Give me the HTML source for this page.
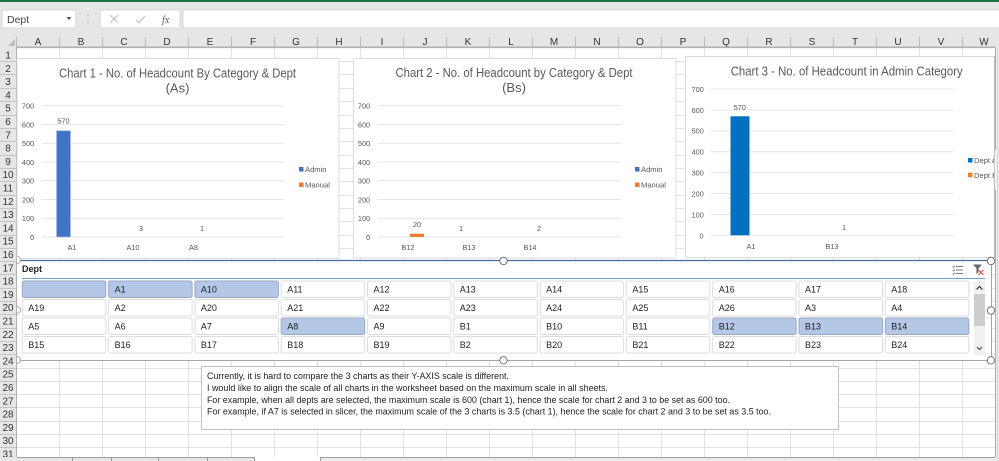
<!DOCTYPE html>
<html><head><meta charset="utf-8"><title>Excel charts</title>
<style>
html,body{margin:0;padding:0;background:#fff;width:999px;height:461px;overflow:hidden}
svg{display:block;font-family:"Liberation Sans",sans-serif;filter:blur(.3px)}
.h{font-size:10px;fill:#333;text-anchor:middle}
.a{font-size:7.3px;fill:#555;text-anchor:middle}
.l{font-size:7.6px;fill:#595959}
.t{font-size:13px;fill:#595959;text-anchor:middle}
.b rect{fill:#fff;stroke:#dcdcdc;width:83.5px;height:16.5px;rx:2px}
.b rect.s{fill:#b4c7e7;stroke:#98a8c2}
.b text{font-size:9px;fill:#222}
.n{font-size:9px;fill:#222}
</style></head><body>
<svg width="999" height="461" viewBox="0 0 999 461" xmlns="http://www.w3.org/2000/svg">
<rect width="999" height="461" fill="#fff"/>
<!-- ribbon -->
<rect width="999" height="48" fill="#e6e6e6"/>
<rect width="999" height="2" fill="#217346"/>
<rect x="2" y="10" width="74" height="18" fill="#fff" stroke="#d6d6d6"/>
<text x="7" y="23" font-size="10.5" fill="#444">Dept</text>
<path d="M66.500 17h5l-2.500 3z" fill="#555"/>
<path d="M88 15v1M88 18.500v1M88 22v1" stroke="#aaa" stroke-width="1.500"/>
<rect x="100" y="10" width="80" height="18" fill="#fff" stroke="#d6d6d6"/>
<path d="M110 15l8 8M118 15l-8 8" stroke="#c4c4c4" stroke-width="1.200" fill="none"/>
<path d="M136 20l3 3 6-7" stroke="#c4c4c4" stroke-width="1.200" fill="none"/>
<text x="162" y="23" font-size="10" font-style="italic" font-family="Liberation Serif" fill="#555">fx</text>
<rect x="183" y="10" width="817" height="18" fill="#fff" stroke="#d6d6d6"/>
<!-- headers -->
<rect x="0" y="37" width="999" height="11" fill="#e6e6e6"/>
<path d="M15 39v7h-7z" fill="#bdbdbd"/>
<path d="M16.500 37V48M59.500 37V47M102.500 37V47M145.500 37V47M188.500 37V47M231.500 37V47M274.500 37V47M317.500 37V47M360.500 37V47M403.500 37V47M446.500 37V47M489.500 37V47M532.500 37V47M575.500 37V47M618.500 37V47M661.500 37V47M704.500 37V47M747.500 37V47M790.500 37V47M833.500 37V47M876.500 37V47M919.500 37V47M962.500 37V47" stroke="#bdbdbd" fill="none"/>
<g class="h">
<text x="38" y="45">A</text><text x="81" y="45">B</text><text x="124" y="45">C</text><text x="167" y="45">D</text><text x="210" y="45">E</text><text x="253" y="45">F</text><text x="296" y="45">G</text><text x="339" y="45">H</text><text x="382" y="45">I</text><text x="425" y="45">J</text><text x="468" y="45">K</text><text x="511" y="45">L</text><text x="554" y="45">M</text><text x="597" y="45">N</text><text x="640" y="45">O</text><text x="683" y="45">P</text><text x="726" y="45">Q</text><text x="769" y="45">R</text><text x="812" y="45">S</text><text x="855" y="45">T</text><text x="898" y="45">U</text><text x="941" y="45">V</text><text x="984" y="45">W</text>
</g>
<rect x="0" y="48" width="16.500" height="413" fill="#e6e6e6"/>
<!-- gridlines -->
<path d="M59.500 48V457M102.500 48V457M145.500 48V457M188.500 48V457M231.500 48V457M274.500 48V457M317.500 48V457M360.500 48V457M403.500 48V457M446.500 48V457M489.500 48V457M532.500 48V457M575.500 48V457M618.500 48V457M661.500 48V457M704.500 48V457M747.500 48V457M790.500 48V457M833.500 48V457M876.500 48V457M919.500 48V457M962.500 48V457" stroke="#e2e2e2" fill="none"/>
<path d="M17 61.500H995M17 74.500H995M17 88.500H995M17 101.500H995M17 115.500H995M17 128.500H995M17 141.500H995M17 155.500H995M17 168.500H995M17 181.500H995M17 195.500H995M17 208.500H995M17 221.500H995M17 235.500H995M17 248.500H995M17 261.500H995M17 274.500H995M17 288.500H995M17 301.500H995M17 314.500H995M17 328.500H995M17 341.500H995M17 354.500H995M17 368.500H995M17 381.500H995M17 394.500H995M17 407.500H995M17 421.500H995M17 434.500H995M17 447.500H995" stroke="#e2e2e2" fill="none"/>
<path d="M0 61.500H16M0 74.500H16M0 88.500H16M0 101.500H16M0 115.500H16M0 128.500H16M0 141.500H16M0 155.500H16M0 168.500H16M0 181.500H16M0 195.500H16M0 208.500H16M0 221.500H16M0 235.500H16M0 248.500H16M0 261.500H16M0 274.500H16M0 288.500H16M0 301.500H16M0 314.500H16M0 328.500H16M0 341.500H16M0 354.500H16M0 368.500H16M0 381.500H16M0 394.500H16M0 407.500H16M0 421.500H16M0 434.500H16M0 447.500H16" stroke="#c4c4c4" fill="none"/>
<path d="M16.500 47.500V457M995.500 47.500V457" stroke="#b0b0b0" fill="none"/>
<path d="M16 47.300H995" stroke="#b0b0b0" stroke-width="1.600" fill="none"/>
<g class="h">
<text x="8" y="58.500">1</text><text x="8" y="71.800">2</text><text x="8" y="85.100">3</text><text x="8" y="98.400">4</text><text x="8" y="111.700">5</text><text x="8" y="125">6</text><text x="8" y="138.300">7</text><text x="8" y="151.600">8</text><text x="8" y="164.900">9</text><text x="8" y="178.200">10</text><text x="8" y="191.500">11</text><text x="8" y="204.800">12</text><text x="8" y="218.100">13</text><text x="8" y="231.400">14</text><text x="8" y="244.700">15</text><text x="8" y="258">16</text><text x="8" y="271.300">17</text><text x="8" y="284.600">18</text><text x="8" y="297.900">19</text><text x="8" y="311.200">20</text><text x="8" y="324.500">21</text><text x="8" y="337.800">22</text><text x="8" y="351.100">23</text><text x="8" y="364.400">24</text><text x="8" y="377.700">25</text><text x="8" y="391">26</text><text x="8" y="404.300">27</text><text x="8" y="417.600">28</text><text x="8" y="430.900">29</text><text x="8" y="444.200">30</text><text x="8" y="457.500">31</text>
</g>
<!-- chart 1 -->
<rect x="17" y="58.500" width="322" height="200" fill="#fff" stroke="#dcdcdc"/>
<text class="t" x="177.500" y="77.500" textLength="237" lengthAdjust="spacingAndGlyphs">Chart 1 - No. of Headcount By Category &amp; Dept</text>
<text class="t" x="177.500" y="92.500">(As)</text>
<path d="M42 105.700H284M42 124.500H284M42 143.200H284M42 162H284M42 180.800H284M42 199.500H284M42 218.300H284M42 237H284" stroke="#e4e4e4" fill="none"/>
<g class="a"><text x="28" y="108.500">700</text><text x="28" y="127.300">600</text><text x="28" y="146">500</text><text x="28" y="164.800">400</text><text x="28" y="183.600">300</text><text x="28" y="202.300">200</text><text x="28" y="221.100">100</text><text x="32" y="240">0</text>
<text x="63.500" y="123.500">570</text><text x="141" y="231">3</text><text x="202" y="231">1</text>
<text x="72" y="250">A1</text><text x="133" y="250">A10</text><text x="193.500" y="250">A8</text></g>
<rect x="56.500" y="130.700" width="14" height="106.300" fill="#4472c4" stroke="#a9c1e8" stroke-width=".7"/>
<rect x="299" y="167" width="4.500" height="4.500" fill="#4472c4"/><text class="l" x="305" y="172">Admin</text>
<rect x="299" y="182.500" width="4.500" height="4.500" fill="#ed7d31"/><text class="l" x="305" y="187.500">Manual</text>
<!-- chart 2 -->
<rect x="353.500" y="58.500" width="322.500" height="199.500" fill="#fff" stroke="#dcdcdc"/>
<text class="t" x="514" y="77" textLength="237" lengthAdjust="spacingAndGlyphs">Chart 2 - No. of Headcount by Category &amp; Dept</text>
<text class="t" x="514" y="92">(Bs)</text>
<path d="M378 105.700H621M378 124.500H621M378 143.200H621M378 162H621M378 180.800H621M378 199.500H621M378 218.300H621M378 237H621" stroke="#e4e4e4" fill="none"/>
<g class="a"><text x="364" y="108.500">700</text><text x="364" y="127.300">600</text><text x="364" y="146">500</text><text x="364" y="164.800">400</text><text x="364" y="183.600">300</text><text x="364" y="202.300">200</text><text x="364" y="221.100">100</text><text x="368" y="240">0</text>
<text x="417" y="227">20</text><text x="461" y="231">1</text><text x="539" y="231">2</text>
<text x="408" y="250">B12</text><text x="469" y="250">B13</text><text x="530" y="250">B14</text></g>
<rect x="410" y="233.700" width="14" height="3.300" fill="#ed7d31"/>
<rect x="635" y="167" width="4.500" height="4.500" fill="#4472c4"/><text class="l" x="641" y="172">Admin</text>
<rect x="635" y="182.500" width="4.500" height="4.500" fill="#ed7d31"/><text class="l" x="641" y="187.500">Manual</text>
<!-- chart 3 -->
<rect x="685.500" y="56.500" width="309" height="201" fill="#fff" stroke="#dcdcdc"/>
<text class="t" x="846.700" y="75.500" textLength="232" lengthAdjust="spacingAndGlyphs">Chart 3 - No. of Headcount in Admin Category</text>
<path d="M710.700 89H953M710.700 110H953M710.700 131H953M710.700 151.700H953M710.700 172.500H953M710.700 193.500H953M710.700 214.400H953M710.700 235.300H953" stroke="#e4e4e4" fill="none"/>
<g class="a"><text x="697.700" y="92">700</text><text x="697.700" y="112.800">600</text><text x="697.700" y="133.700">500</text><text x="697.700" y="154.600">400</text><text x="697.700" y="175.500">300</text><text x="697.700" y="196.400">200</text><text x="697.700" y="217.300">100</text><text x="701.500" y="238.300">0</text>
<text x="739.700" y="110">570</text><text x="844" y="230">1</text>
<text x="751" y="249">A1</text><text x="832" y="249">B13</text></g>
<rect x="730.500" y="116.300" width="19" height="119" fill="#0070c0"/>
<rect x="968" y="158" width="4.500" height="4.500" fill="#0070c0"/><text class="l" x="974" y="163">Dept A</text>
<rect x="968" y="172.700" width="4.500" height="4.500" fill="#ed7d31"/><text class="l" x="974" y="178">Dept B</text>
<rect x="994" y="150" width="5" height="40" fill="#fff"/>
<path d="M994.500 56V258" stroke="#bbb"/>
<!-- slicer -->
<rect x="17" y="260" width="974" height="100" fill="#fff"/>
<path d="M17 260.500H991" stroke="#4a6ca6" stroke-width="1.200"/>
<path d="M17 360.500H991" stroke="#a6a6a6"/>
<path d="M991.500 260V360" stroke="#a6a6a6"/>
<text x="22" y="272" font-size="9" font-weight="bold" fill="#222">Dept</text>
<path d="M22 278.500H985" stroke="#6f9bd8"/>
<g class="b" transform="translate(0,281)">
<rect class="s" x="22.300" y="0"/><rect class="s" x="108.600" y="0"/><rect class="s" x="194.900" y="0"/><rect x="281.200" y="0"/><rect x="367.500" y="0"/><rect x="453.800" y="0"/><rect x="540.100" y="0"/><rect x="626.400" y="0"/><rect x="712.700" y="0"/><rect x="799" y="0"/><rect x="885.300" y="0"/>
<text x="114.600" y="11.500">A1</text><text x="200.900" y="11.500">A10</text><text x="287.200" y="11.500">A11</text><text x="373.500" y="11.500">A12</text><text x="459.800" y="11.500">A13</text><text x="546.100" y="11.500">A14</text><text x="632.400" y="11.500">A15</text><text x="718.700" y="11.500">A16</text><text x="805" y="11.500">A17</text><text x="891.300" y="11.500">A18</text>
</g>
<g class="b" transform="translate(0,299.500)">
<rect x="22.300" y="0"/><rect x="108.600" y="0"/><rect x="194.900" y="0"/><rect x="281.200" y="0"/><rect x="367.500" y="0"/><rect x="453.800" y="0"/><rect x="540.100" y="0"/><rect x="626.400" y="0"/><rect x="712.700" y="0"/><rect x="799" y="0"/><rect x="885.300" y="0"/>
<text x="28.300" y="11.500">A19</text><text x="114.600" y="11.500">A2</text><text x="200.900" y="11.500">A20</text><text x="287.200" y="11.500">A21</text><text x="373.500" y="11.500">A22</text><text x="459.800" y="11.500">A23</text><text x="546.100" y="11.500">A24</text><text x="632.400" y="11.500">A25</text><text x="718.700" y="11.500">A26</text><text x="805" y="11.500">A3</text><text x="891.300" y="11.500">A4</text>
</g>
<g class="b" transform="translate(0,318)">
<rect x="22.300" y="0"/><rect x="108.600" y="0"/><rect x="194.900" y="0"/><rect class="s" x="281.200" y="0"/><rect x="367.500" y="0"/><rect x="453.800" y="0"/><rect x="540.100" y="0"/><rect x="626.400" y="0"/><rect class="s" x="712.700" y="0"/><rect class="s" x="799" y="0"/><rect class="s" x="885.300" y="0"/>
<text x="28.300" y="11.500">A5</text><text x="114.600" y="11.500">A6</text><text x="200.900" y="11.500">A7</text><text x="287.200" y="11.500">A8</text><text x="373.500" y="11.500">A9</text><text x="459.800" y="11.500">B1</text><text x="546.100" y="11.500">B10</text><text x="632.400" y="11.500">B11</text><text x="718.700" y="11.500">B12</text><text x="805" y="11.500">B13</text><text x="891.300" y="11.500">B14</text>
</g>
<g class="b" transform="translate(0,336.500)">
<rect x="22.300" y="0"/><rect x="108.600" y="0"/><rect x="194.900" y="0"/><rect x="281.200" y="0"/><rect x="367.500" y="0"/><rect x="453.800" y="0"/><rect x="540.100" y="0"/><rect x="626.400" y="0"/><rect x="712.700" y="0"/><rect x="799" y="0"/><rect x="885.300" y="0"/>
<text x="28.300" y="11.500">B15</text><text x="114.600" y="11.500">B16</text><text x="200.900" y="11.500">B17</text><text x="287.200" y="11.500">B18</text><text x="373.500" y="11.500">B19</text><text x="459.800" y="11.500">B2</text><text x="546.100" y="11.500">B20</text><text x="632.400" y="11.500">B21</text><text x="718.700" y="11.500">B22</text><text x="805" y="11.500">B23</text><text x="891.300" y="11.500">B24</text>
</g>
<!-- slicer scrollbar -->
<rect x="974" y="281" width="11" height="74" fill="#f0f0f0"/>
<rect x="974" y="294" width="11" height="32" fill="#cdcdcd"/>
<path d="M976.500 289.500l3-3 3 3" stroke="#333" stroke-width="1.200" fill="none"/>
<path d="M977 347l2.500 2.500 2.500-2.500" stroke="#555" stroke-width="1.200" fill="none"/>
<!-- slicer icons -->
<path d="M956 266.500h7M956 270h7M956 273.500h7" stroke="#777" fill="none"/>
<path d="M952.500 266.500l1 1 1.500-2M952.500 270l1 1 1.500-2M952.500 273.500l1 1 1.500-2" stroke="#777" stroke-width=".8" fill="none"/>
<path d="M973 264.500h9l-3.500 4v4l-2 1.500v-5.500z" fill="#666"/>
<path d="M978.500 270l5 5M983.500 270l-5 5" stroke="#e2503a" stroke-width="1.100" fill="none"/>
<!-- handles -->
<g fill="#fff" stroke="#777" stroke-width="1">
<circle cx="503.500" cy="261" r="3.700"/><circle cx="991" cy="261" r="3.700"/><circle cx="991" cy="310.500" r="3.700"/><circle cx="503.500" cy="360.300" r="3.700"/><circle cx="991" cy="360.300" r="3.700"/>
</g>
<path d="M17 256.500a3.500 3.500 0 0 1 0 7M17 306.500a3.500 3.500 0 0 1 0 7M17 356.500a3.500 3.500 0 0 1 0 7" fill="#fff" stroke="#999" stroke-width=".8"/>
<!-- text box -->
<rect x="201.500" y="366.500" width="637" height="63" fill="#fff" stroke="#c0c0c0"/>
<g class="n">
<text x="207" y="379" textLength="302" lengthAdjust="spacingAndGlyphs">Currently, it is hard to compare the 3 charts as their Y-AXIS scale is different.</text>
<text x="207" y="391" textLength="401" lengthAdjust="spacingAndGlyphs">I would like to align the scale of all charts in the worksheet based on the maximum scale in all sheets.</text>
<text x="207" y="403" textLength="523" lengthAdjust="spacingAndGlyphs">For example, when all depts are selected, the maximum scale is 600 (chart 1), hence the scale for chart 2 and 3 to be set as 600 too.</text>
<text x="207" y="414.500" textLength="564" lengthAdjust="spacingAndGlyphs">For example, if A7 is selected in slicer, the maximum scale of the 3 charts is 3.5 (chart 1), hence the scale for chart 2 and 3 to be set as 3.5 too.</text>
</g>
<!-- bottom tabs -->
<rect x="0" y="457" width="254" height="4" fill="#e6e6e6"/>
<rect x="320" y="457" width="679" height="4" fill="#ececec"/>
<path d="M17 457.500H254M320 457.500H995" stroke="#9f9f9f" fill="none"/>
<path d="M72.500 458V461M111.500 458V461M158.500 458V461M207.500 458V461M254.500 457V461M320.500 457V461" stroke="#9a9a9a" fill="none"/>
<rect x="996" y="48" width="3" height="413" fill="#ececec"/>
<path d="M997.500 48V461" stroke="#d8d8d8"/>
</svg>
</body></html>
